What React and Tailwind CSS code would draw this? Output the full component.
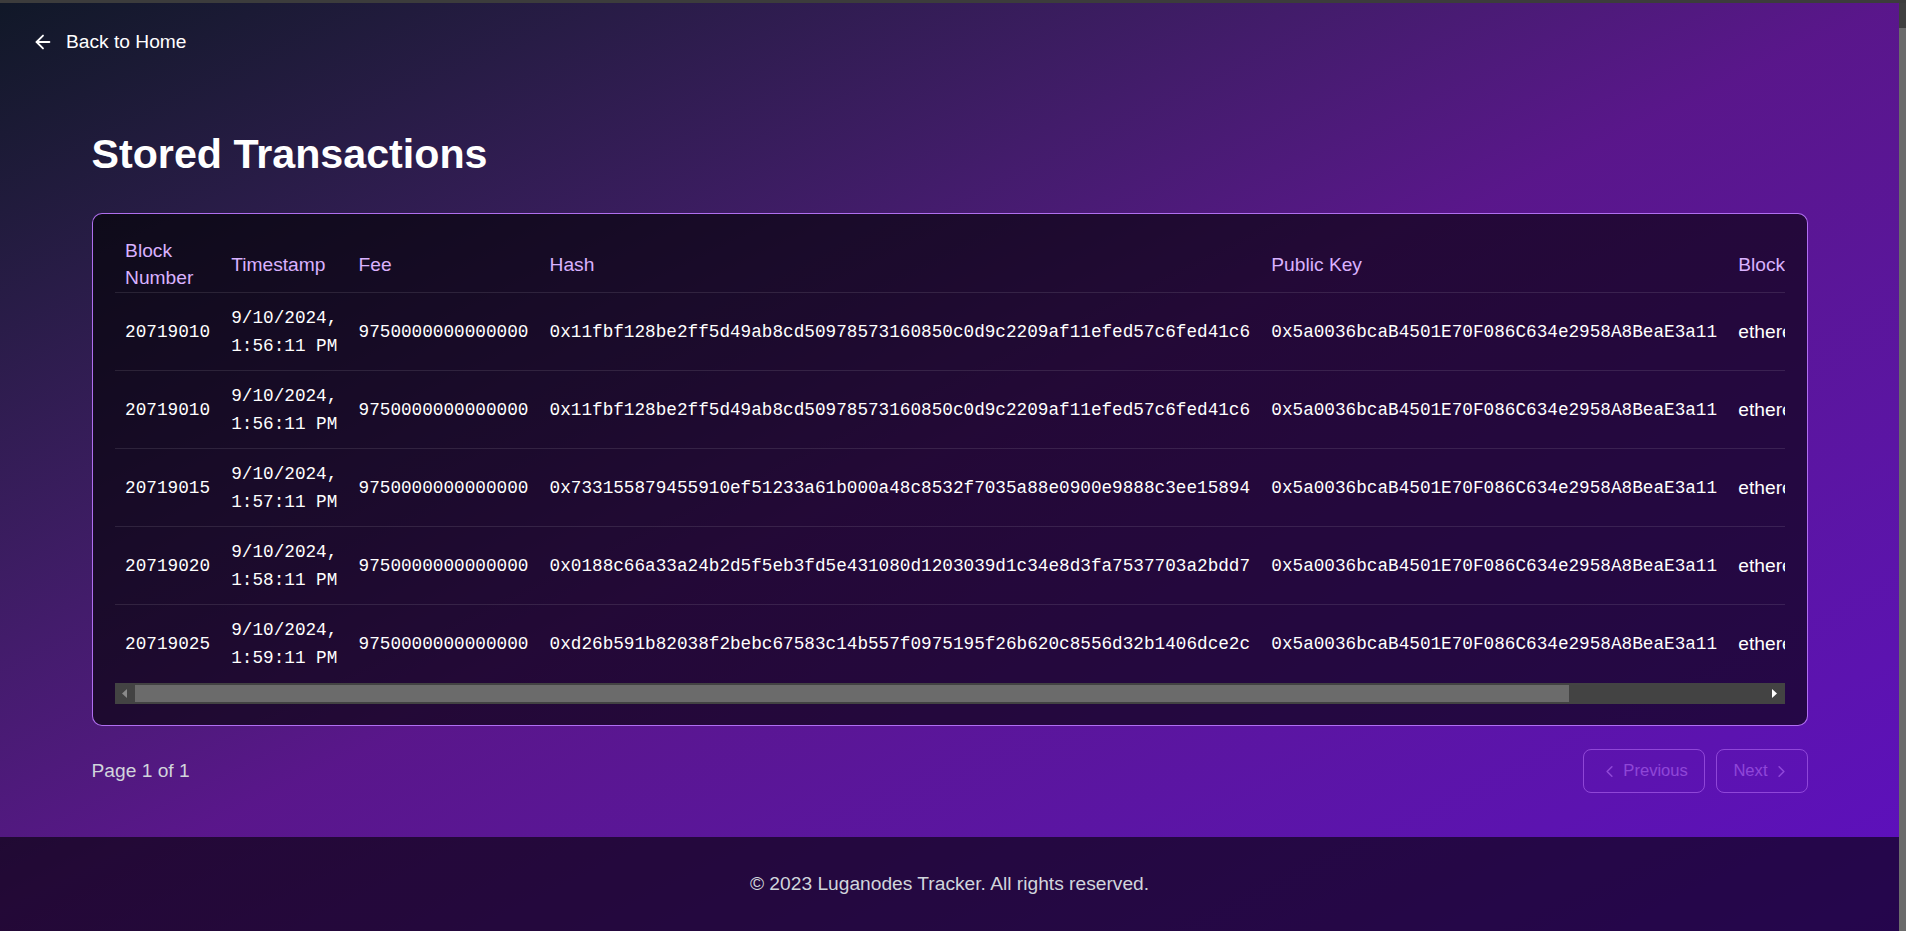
import React from "react";
import { ArrowLeft, ChevronLeft, ChevronRight } from "lucide-react";

const PUBKEY = "0x5a0036bcaB4501E70F086C634e2958A8BeaE3a11";

const transactions = [
  {
    blockNumber: 20719010,
    date: "9/10/2024,",
    time: "1:56:11 PM",
    fee: "9750000000000000",
    hash: "0x11fbf128be2ff5d49ab8cd50978573160850c0d9c2209af11efed57c6fed41c6",
  },
  {
    blockNumber: 20719010,
    date: "9/10/2024,",
    time: "1:56:11 PM",
    fee: "9750000000000000",
    hash: "0x11fbf128be2ff5d49ab8cd50978573160850c0d9c2209af11efed57c6fed41c6",
  },
  {
    blockNumber: 20719015,
    date: "9/10/2024,",
    time: "1:57:11 PM",
    fee: "9750000000000000",
    hash: "0x733155879455910ef51233a61b000a48c8532f7035a88e0900e9888c3ee15894",
  },
  {
    blockNumber: 20719020,
    date: "9/10/2024,",
    time: "1:58:11 PM",
    fee: "9750000000000000",
    hash: "0x0188c66a33a24b2d5f5eb3fd5e431080d1203039d1c34e8d3fa7537703a2bdd7",
  },
  {
    blockNumber: 20719025,
    date: "9/10/2024,",
    time: "1:59:11 PM",
    fee: "9750000000000000",
    hash: "0xd26b591b82038f2bebc67583c14b557f0975195f26b620c8556d32b1406dce2c",
  },
];

const headers = [
  "Block Number",
  "Timestamp",
  "Fee",
  "Hash",
  "Public Key",
  "Blockchain",
  "Network",
  "Status",
];

const monoCell =
  "px-[10.6px] py-[10.5px] font-['Liberation_Mono',monospace] text-[17.7px] leading-[28px]";
const sansCell = "px-[10.6px] py-[10.5px] text-[19.2px] leading-[28px]";

// drawn horizontal scrollbar (dark windows style)
function ScrollBar() {
  return (
    <div className="flex h-[21px] bg-[#434343]">
      <div className="flex w-[20px] items-center justify-center">
        <svg width="5" height="9" viewBox="0 0 5 9">
          <polygon points="5,0 0,4.5 5,9" fill="#8a8a8a" />
        </svg>
      </div>
      <div className="flex-1 py-[2px]">
        <div className="h-full w-[88%] bg-[#6b6b6b]" />
      </div>
      <div className="flex w-[20px] items-center justify-center">
        <svg width="5" height="9" viewBox="0 0 5 9">
          <polygon points="0,0 5,4.5 0,9" fill="#ffffff" />
        </svg>
      </div>
    </div>
  );
}

function App() {
  return (
    <div className="flex h-screen min-h-[931px] flex-col overflow-hidden font-['Liberation_Sans',Arial,sans-serif]">
      <div className="h-[3px] shrink-0 bg-[#3c3c3c]" />
      <div className="flex min-h-0 flex-1">
        <div className="flex flex-1 flex-col bg-gradient-to-br from-gray-900 via-purple-900 to-violet-800">
          {/* Top nav */}
          <div className="pl-[32px] pt-[24px]">
            <a href="#" className="flex w-fit items-center gap-[12px] text-[19.2px] leading-[29px] text-white">
              <ArrowLeft size={22} strokeWidth={2} />
              Back to Home
            </a>
          </div>

          {/* Main */}
          <main className="flex-1">
            <div className="mx-auto w-full max-w-[1716px]">
              <h1 className="mt-[74px] mb-[35px] text-[41.2px] leading-[48px] font-bold text-white">
                Stored Transactions
              </h1>

              <div className="rounded-[10px] border border-purple-400/90 bg-black/60 px-[22px] pt-[22px] pb-[21px]">
                <div className="overflow-x-auto [scrollbar-width:none]">
                  <table className="w-full text-left">
                    <thead>
                      <tr className="border-b border-white/10">
                        {headers.map((h) => (
                          <th
                            key={h}
                            className="px-[10.6px] py-[1px] text-[19.2px] leading-[27px] font-normal text-purple-300"
                          >
                            {h}
                          </th>
                        ))}
                      </tr>
                    </thead>
                    <tbody>
                      {transactions.map((tx, i) => (
                        <tr key={i} className="border-b border-white/10 text-white last:border-transparent">
                          <td className={monoCell}>{tx.blockNumber}</td>
                          <td className={monoCell}>
                            {tx.date} {tx.time}
                          </td>
                          <td className={monoCell}>{tx.fee}</td>
                          <td className={monoCell}>{tx.hash}</td>
                          <td className={monoCell}>{PUBKEY}</td>
                          <td className={sansCell}>ethereum</td>
                          <td className={sansCell}>mainnet</td>
                          <td className={sansCell}>confirmed</td>
                        </tr>
                      ))}
                    </tbody>
                  </table>
                </div>
                <ScrollBar />
              </div>

              {/* Pagination */}
              <div className="mt-[23px] flex items-center justify-between">
                <span className="text-[19.2px] text-gray-300">Page 1 of 1</span>
                <div className="flex gap-[11px]">
                  <button
                    disabled
                    className="flex h-[44px] items-center gap-[4px] rounded-[8px] border border-purple-400 px-[16.5px] text-[16.6px] text-purple-400 opacity-50"
                  >
                    <ChevronLeft size={19} strokeWidth={2} />
                    Previous
                  </button>
                  <button
                    disabled
                    className="flex h-[44px] items-center gap-[4px] rounded-[8px] border border-purple-400 px-[16px] text-[16.6px] text-purple-400 opacity-50"
                  >
                    Next
                    <ChevronRight size={19} strokeWidth={2} />
                  </button>
                </div>
              </div>
            </div>
          </main>

          {/* Footer */}
          <footer className="flex h-[94px] shrink-0 items-center justify-center bg-black/60">
            <p className="text-[19.2px] text-gray-300">© 2023 Luganodes Tracker. All rights reserved.</p>
          </footer>
        </div>
        <div className="flex w-[7px] shrink-0 flex-col bg-[#6b6b6b]">
          <div className="h-[25px] bg-[#3f3f3f]" />
        </div>
      </div>
    </div>
  );
}

export default App;
